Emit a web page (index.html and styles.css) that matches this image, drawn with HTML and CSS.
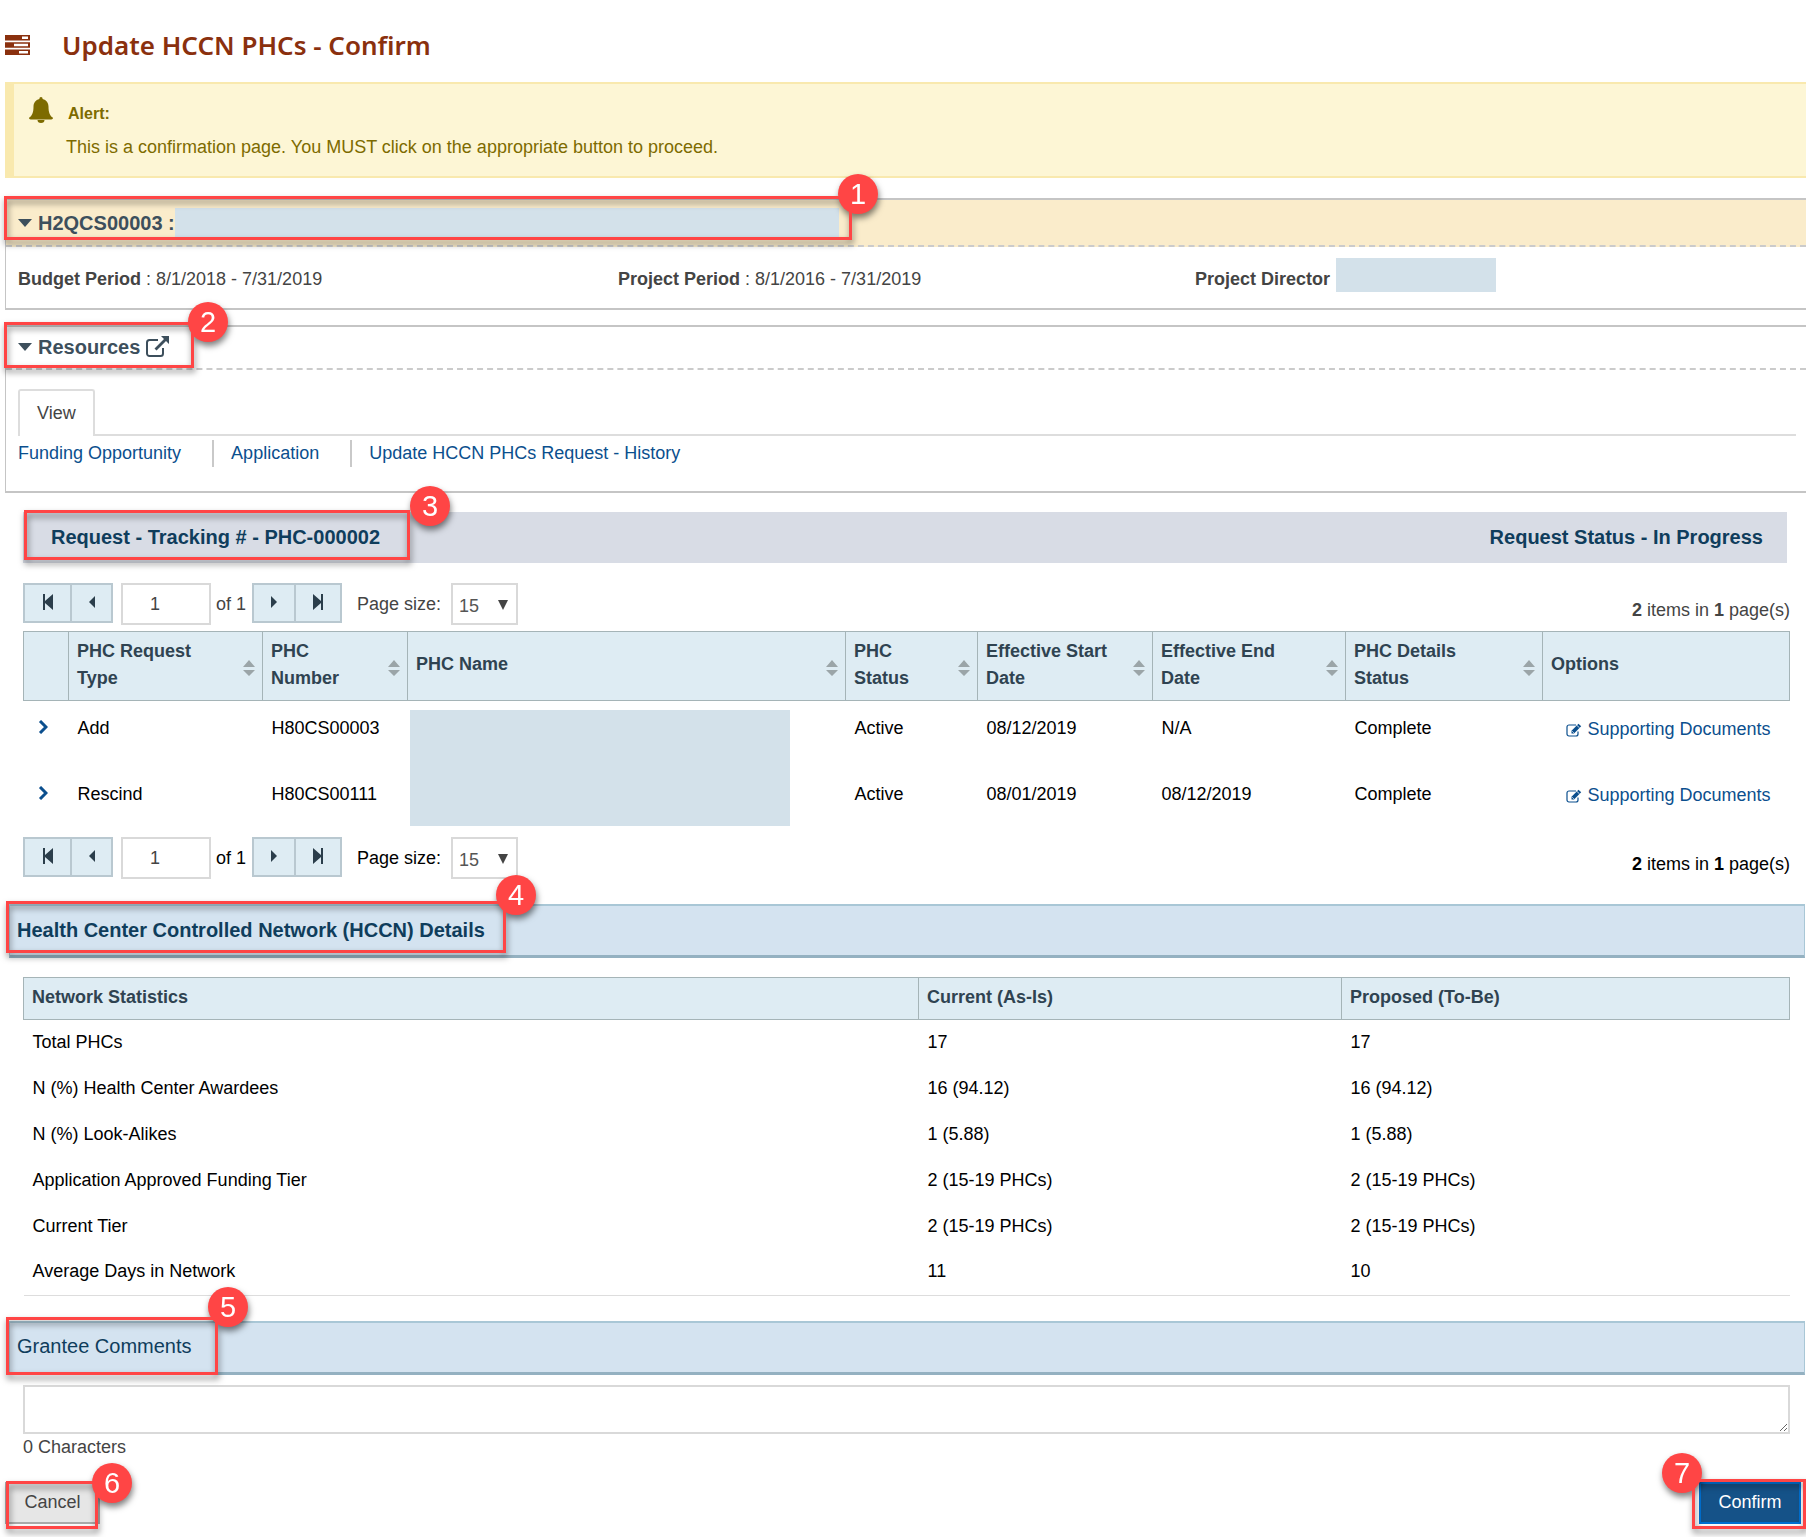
FILE: index.html
```html
<!DOCTYPE html>
<html lang="en">
<head>
<meta charset="utf-8">
<title>Update HCCN PHCs - Confirm</title>
<link rel="stylesheet" href="styles.css">
</head>
<body>
<svg class="defs" aria-hidden="true">
  <symbol id="sort" viewBox="0 0 12 16"><path d="M6 0l6 7H0zM6 16L0 10h12z"/></symbol>
  <symbol id="caret" viewBox="0 0 14 8"><path d="M0 0h14L7 8z"/></symbol>
  <symbol id="first" viewBox="0 0 12 16"><path d="M1 0h2v7l8-7v16L3 9v7H1z"/></symbol>
  <symbol id="last" viewBox="0 0 12 16"><path d="M11 0H9v7L1 0v16l8-7v7h2z"/></symbol>
  <symbol id="prev" viewBox="0 0 6 12"><path d="M6 0v12L0 6z"/></symbol>
  <symbol id="next" viewBox="0 0 6 12"><path d="M0 0v12l6-6z"/></symbol>
  <symbol id="chevron" viewBox="0 0 10 14"><path d="M2 1l6 6-6 6" fill="none" stroke="currentColor" stroke-width="3"/></symbol>
  <symbol id="edit" viewBox="0 0 16 14"><path d="M12 8.500V11a2 2 0 0 1-2 2H3a2 2 0 0 1-2-2V4a2 2 0 0 1 2-2h7" fill="none" stroke="currentColor" stroke-width="1.200"/><path d="M5.500 10.500V7.800L12.500.8l2.700 2.500-7.200 7.200z"/><path d="M6.300 8.300l1.500 1.500M11 2.500l2.500 2.300" stroke="#fff" stroke-width=".8"/></symbol>
</svg>

<header class="page-title">
  <svg width="25" height="20" viewBox="0 0 25 20" aria-hidden="true"><path d="M0 0h25v5.500H0zM0 7.200h25v5.500H0zM0 14.500h25V20H0z"/><path d="M17 1.500h6v2.500h-6zM9 8.700h14v2.500H9zM14 16h9v2.500h-9z" fill="#fff"/></svg>
  <h1>Update HCCN PHCs - Confirm</h1>
</header>

<main>
  <section class="alert" role="alert">
    <svg width="24" height="26" viewBox="0 0 24 26" aria-hidden="true"><path d="M12 0c1 0 1.700.8 1.600 1.900C17.500 2.800 19.500 6 19.500 9.500c0 6 1.200 9 4.500 11.300 0 1-.7 1.700-1.700 1.700H1.700C.7 22.500 0 21.800 0 20.800 3.300 18.500 4.500 15.500 4.500 9.500 4.500 6 6.500 2.800 10.400 1.900 10.300.8 11 0 12 0zM8.500 23h7a3.500 3 0 0 1-7 0z"/></svg>
    <div>
      <strong>Alert:</strong>
      <p>This is a confirmation page. You MUST click on the appropriate button to proceed.</p>
    </div>
  </section>

  <section class="panel">
    <h2 class="panel-head grant"><svg width="14" height="8" aria-hidden="true"><use href="#caret"/></svg><span>H2QCS00003 :</span><span class="redact name"></span>
      <span class="callout c1"><b>1</b></span></h2>
    <div class="facts">
      <p><strong>Budget Period</strong> : 8/1/2018 - 7/31/2019</p>
      <p><strong>Project Period</strong> : 8/1/2016 - 7/31/2019</p>
      <p class="director"><strong>Project Director</strong><span class="redact person"></span></p>
    </div>
  </section>

  <section class="panel resources">
    <h2 class="panel-head"><svg width="14" height="8" aria-hidden="true"><use href="#caret"/></svg><span>Resources</span>
      <svg width="23" height="21" viewBox="0 0 23 21" aria-hidden="true"><path d="M12 4H3.500A2.500 2.500 0 0 0 1 6.500v11A2.500 2.500 0 0 0 3.500 20h11a2.500 2.500 0 0 0 2.500-2.500V12" fill="none" stroke="currentColor" stroke-width="2"/><path d="M15 0h8v8l-3-3-9.500 9.500-2-2L18 3z"/></svg>
      <span class="callout c2"><b>2</b></span></h2>
    <div class="tabs"><button type="button" class="tab">View</button></div>
    <nav class="links"><a href="#">Funding Opportunity</a><a href="#">Application</a><a href="#">Update HCCN PHCs Request - History</a></nav>
  </section>

  <section class="request">
    <div class="request-bar"><h2>Request - Tracking # - PHC-000002</h2><h2>Request Status - In Progress</h2>
      <span class="callout c3"><b>3</b></span></div>

    <div class="pager muted">
      <div class="group"><button type="button" class="wide" aria-label="First page"><svg width="12" height="16"><use href="#first"/></svg></button><button type="button" aria-label="Previous page"><svg width="6" height="12"><use href="#prev"/></svg></button></div>
      <input type="text" value="1" aria-label="Page number"><span class="of">of 1</span>
      <div class="group"><button type="button" aria-label="Next page"><svg width="6" height="12"><use href="#next"/></svg></button><button type="button" class="wide" aria-label="Last page"><svg width="12" height="16"><use href="#last"/></svg></button></div>
      <label for="size-top">Page size:</label>
      <span class="select"><select id="size-top"><option>15</option></select><svg width="10" height="10" viewBox="0 0 10 10" aria-hidden="true"><path d="M0 0h10L5 10z"/></svg></span>
      <span class="count"><b>2</b> items in <b>1</b> page(s)</span>
    </div>

    <div class="grid-wrap">
    <table class="phc">
      <colgroup><col class="w-exp"><col class="w-type"><col class="w-num"><col><col class="w-status"><col class="w-start"><col class="w-end"><col class="w-det"><col class="w-opt"></colgroup>
      <thead><tr>
        <th></th>
        <th><div>PHC Request Type<svg width="12" height="16"><use href="#sort"/></svg></div></th>
        <th><div>PHC Number<svg width="12" height="16"><use href="#sort"/></svg></div></th>
        <th><div>PHC Name<svg width="12" height="16"><use href="#sort"/></svg></div></th>
        <th><div>PHC Status<svg width="12" height="16"><use href="#sort"/></svg></div></th>
        <th><div>Effective Start Date<svg width="12" height="16"><use href="#sort"/></svg></div></th>
        <th><div>Effective End Date<svg width="12" height="16"><use href="#sort"/></svg></div></th>
        <th><div>PHC Details Status<svg width="12" height="16"><use href="#sort"/></svg></div></th>
        <th>Options</th>
      </tr></thead>
      <tbody>
        <tr><td class="exp"><svg width="10" height="14"><use href="#chevron"/></svg></td><td>Add</td><td>H80CS00003</td><td rowspan="2" class="hidden-names"><div class="redact names"></div></td><td>Active</td><td>08/12/2019</td><td>N/A</td><td>Complete</td><td class="opt"><a href="#"><svg width="16" height="14"><use href="#edit"/></svg>Supporting Documents</a></td></tr>
        <tr><td class="exp"><svg width="10" height="14"><use href="#chevron"/></svg></td><td>Rescind</td><td>H80CS00111</td><td>Active</td><td>08/01/2019</td><td>08/12/2019</td><td>Complete</td><td class="opt"><a href="#"><svg width="16" height="14"><use href="#edit"/></svg>Supporting Documents</a></td></tr>
      </tbody>
    </table>
    </div>

    <div class="pager">
      <div class="group"><button type="button" class="wide" aria-label="First page"><svg width="12" height="16"><use href="#first"/></svg></button><button type="button" aria-label="Previous page"><svg width="6" height="12"><use href="#prev"/></svg></button></div>
      <input type="text" value="1" aria-label="Page number"><span class="of">of 1</span>
      <div class="group"><button type="button" aria-label="Next page"><svg width="6" height="12"><use href="#next"/></svg></button><button type="button" class="wide" aria-label="Last page"><svg width="12" height="16"><use href="#last"/></svg></button></div>
      <label for="size-bottom">Page size:</label>
      <span class="select"><select id="size-bottom"><option>15</option></select><svg width="10" height="10" viewBox="0 0 10 10" aria-hidden="true"><path d="M0 0h10L5 10z"/></svg></span>
      <span class="count"><b>2</b> items in <b>1</b> page(s)</span>
    </div>
  </section>

  <h2 class="band">Health Center Controlled Network (HCCN) Details<span class="callout c4"><b>4</b></span></h2>
  <table class="stats">
    <colgroup><col><col class="w-cur"><col class="w-prop"></colgroup>
    <thead><tr><th>Network Statistics</th><th>Current (As-Is)</th><th>Proposed (To-Be)</th></tr></thead>
    <tbody>
      <tr><td>Total PHCs</td><td>17</td><td>17</td></tr>
      <tr><td>N (%) Health Center Awardees</td><td>16 (94.12)</td><td>16 (94.12)</td></tr>
      <tr><td>N (%) Look-Alikes</td><td>1 (5.88)</td><td>1 (5.88)</td></tr>
      <tr><td>Application Approved Funding Tier</td><td>2 (15-19 PHCs)</td><td>2 (15-19 PHCs)</td></tr>
      <tr><td>Current Tier</td><td>2 (15-19 PHCs)</td><td>2 (15-19 PHCs)</td></tr>
      <tr><td>Average Days in Network</td><td>11</td><td>10</td></tr>
    </tbody>
  </table>

  <div class="band plain"><label for="comments">Grantee Comments</label><span class="callout c5"><b>5</b></span></div>
  <div class="comments"><textarea id="comments"></textarea><p>0 Characters</p></div>

  <footer class="actions">
    <div class="action"><button type="button" class="cancel">Cancel</button><span class="callout c6"><b>6</b></span></div>
    <div class="action"><button type="button" class="confirm">Confirm</button><span class="callout c7"><b>7</b></span></div>
  </footer>
</main>
</body>
</html>
```

FILE: styles.css
```css
* { box-sizing: border-box; }
body { margin: 0; background: #fff; color: #444; font: 18px/27px "Liberation Sans", Arial, sans-serif; overflow-x: hidden; }
h1, h2, p { margin: 0; }
svg { fill: currentColor; flex: none; }
a { color: #0b4f8e; text-decoration: none; }
button, input, select, textarea { font: inherit; color: inherit; margin: 0; border-radius: 0; }
.defs { position: absolute; width: 0; height: 0; }
.redact { background: #d3e1ea; }

.page-title { display: flex; align-items: center; gap: 32px; height: 82px; padding: 8px 5px 0; color: #8a300e; }
.page-title h1 { font: 600 26px/34px "Lucida Sans", "Noto Sans", sans-serif; }

main { padding-left: 5px; }
.alert { display: flex; gap: 13px; height: 96px; padding: 13px 15px; border: solid #f9e9ae; border-width: 2px 0 2px 9px; background: #fdf6d5; color: #7d6b00; }
.alert div { padding-top: 3px; }
.alert strong { display: block; font-size: 16px; line-height: 27px; padding-left: 2px; }
.alert p { padding-top: 7px; }

.panel { margin-top: 20px; border: solid #c5c5c5; border-width: 2px 0 2px 1px; }
.panel + .panel { margin-top: 15px; }
.panel-head { position: relative; display: flex; align-items: center; gap: 6px; height: 43px; padding: 0 0 2px 12px; border-bottom: 2px dashed #cbcbcb; color: #3d4f5c; font-size: 20px; line-height: 28px; }
.grant { height: 47px; padding-bottom: 0; background: #faeccb; }
.grant .name { width: 664px; height: 29px; margin-left: -6px; }
.facts { display: grid; grid-template-columns: 600px 577px 1fr; align-items: center; height: 61px; padding: 4px 11px 0 12px; }
.director { display: flex; gap: 6px; }
.director .person { width: 160px; height: 34px; margin: -8px 0 0; }
.facts .director { height: 27px; }

.resources { height: 168px; }
.tabs { display: flex; margin: 19px 10px 0 12px; border-bottom: 2px solid #ddd; }
.tab { height: 47px; margin-bottom: -2px; padding: 0 17px; border: 2px solid #ddd; border-bottom: 0; border-radius: 3px 3px 0 0; background: #fff; }
.links { display: flex; padding: 4px 12px; }
.links a + a { margin-left: 31px; padding-left: 17px; border-left: 2px solid #c9c9c9; }

.request { padding: 19px 16px 0 18px; }
.request-bar { position: relative; display: flex; justify-content: space-between; align-items: center; height: 51px; margin-right: 3px; padding: 0 24px 2px 28px; background: #d8dce5; color: #0f3d5c; }
.request-bar h2 { font-size: 20px; line-height: 28px; }

.pager { display: flex; align-items: flex-start; height: 48px; color: #000; line-height: 42px; }
.request-bar + .pager { margin-top: 20px; }
.muted { color: #444; }
.group { display: flex; height: 40px; border: 2px solid #b9c8d0; background: #deecf3; color: #2b3e4b; }
.group button { display: flex; align-items: center; justify-content: center; width: 40px; padding: 0 0 2px; border: 0; background: none; }
.group button.wide { width: 45px; }
.group button + button { width: 41px; border-left: 2px solid #b9c8d0; }
.group button + button.wide { width: 46px; }
.pager input { width: 90px; height: 42px; margin-left: 8px; padding: 0 24px 0 2px; border: 2px solid #d9d9d9; text-align: center; color: #444; }
.of { margin: 0 6px 0 5px; }
.pager label { margin: 0 10px 0 15px; }
.select { position: relative; }
.select select { display: block; width: 67px; height: 42px; padding: 0 6px 3px; border: 2px solid #d9d9d9; background: #fff; color: #555; appearance: none; }
.select svg { position: absolute; right: 10px; top: 17px; color: #444; pointer-events: none; }
.count { margin-left: auto; padding-top: 6px; }

table { width: 100%; border-collapse: collapse; table-layout: fixed; }
th { padding: 0 7px 0 8px; text-align: left; }
td { padding: 0 9px; }
th { border: 1px solid #a5b4b7; background: #deecf3; color: #2f4351; }
tbody { color: #000; }
.phc thead tr { height: 69px; }
.phc th { padding-bottom: 3px; }
.phc th div { display: flex; align-items: center; justify-content: space-between; gap: 20px; }
.phc th svg { color: #9ba5a8; margin-top: 6px; }
.phc tbody tr { height: 66px; }
.phc td { vertical-align: top; padding-top: 14px; }
.w-exp { width: 45px; } .w-type { width: 194px; } .w-num { width: 145px; }
.w-status { width: 132px; } .w-start { width: 175px; } .w-end { width: 193px; } .w-det { width: 197px; } .w-opt { width: 247px; }
.phc td.exp { padding-left: 14px; color: #0b4f8e; }
.phc td.hidden-names { padding: 9px 2px 0; }
.names { width: 380px; height: 116px; }
.phc td.opt { padding: 15px 0 0 23px; white-space: nowrap; }
.opt svg { margin-right: 6px; vertical-align: -2px; }
.grid-wrap + .pager { margin-top: 4px; }

.band { position: relative; height: 54px; margin: 19px 1px 0 4px; padding: 10px 7px; border: solid #a9c7d6; border-width: 2px 1px 3px; border-bottom-color: #94b1c1; background: #d4e3f0; color: #0f3d5c; font-size: 20px; line-height: 28px; }
.stats { width: calc(100% - 34px); margin: 19px 16px 0 18px; border-bottom: 1px solid #ddd; }
.stats thead tr { height: 42px; }
.stats th { padding-bottom: 1px; }
.stats tbody tr { height: 46px; }
.w-cur { width: 423px; } .w-prop { width: 448px; }
.stats + .band { margin-top: 25px; }
.plain { padding-top: 9px; }

.comments { padding: 10px 16px 0 18px; }
.comments textarea { display: block; width: 100%; height: 49px; border: 2px solid #d9d9d9; background: #fff; resize: both; }
.actions { display: flex; justify-content: space-between; padding: 21px 5px 13px 0; }
.action { position: relative; }
.action button { display: block; height: 42px; border: 2px solid #aaa; }
.cancel { width: 95px; padding: 0 16px; background: #e6e6e6; }
.confirm { width: 102px; padding: 0 16px; background: #155288; color: #fff; }
.action .confirm { border-color: #0070d2; }

/* Numbered step markers laid over the page */
.callout { position: absolute; border: 3px solid #ff4545; filter: drop-shadow(1px 4px 3px rgba(0, 0, 0, .5)); pointer-events: none; }
.callout b { position: absolute; width: 40px; height: 40px; border-radius: 50%; background: #ff4545; color: #fff; font-size: 29px; font-weight: 400; line-height: 40px; text-align: center; }
.c1 { left: -2px; top: -4px; width: 848px; height: 44px; } .c1 b { right: -29px; top: -25px; }
.c2 { left: -2px; top: -5px; width: 190px; height: 46px; } .c2 b { right: -37px; top: -23px; }
.c3 { left: 1px; top: -2px; width: 386px; height: 50px; } .c3 b { right: -43px; top: -27px; }
.c4 { left: -4px; top: -5px; width: 500px; height: 52px; } .c4 b { right: -33px; top: -29px; }
.c5 { left: -4px; top: -6px; width: 212px; height: 58px; } .c5 b { right: -33px; top: -33px; }
.c6 { left: 1px; top: -1px; width: 92px; height: 48px; } .c6 b { right: -37px; top: -21px; }
.c7 { right: -5px; top: -3px; width: 114px; height: 50px; } .c7 b { left: -33px; top: -29px; }
```
